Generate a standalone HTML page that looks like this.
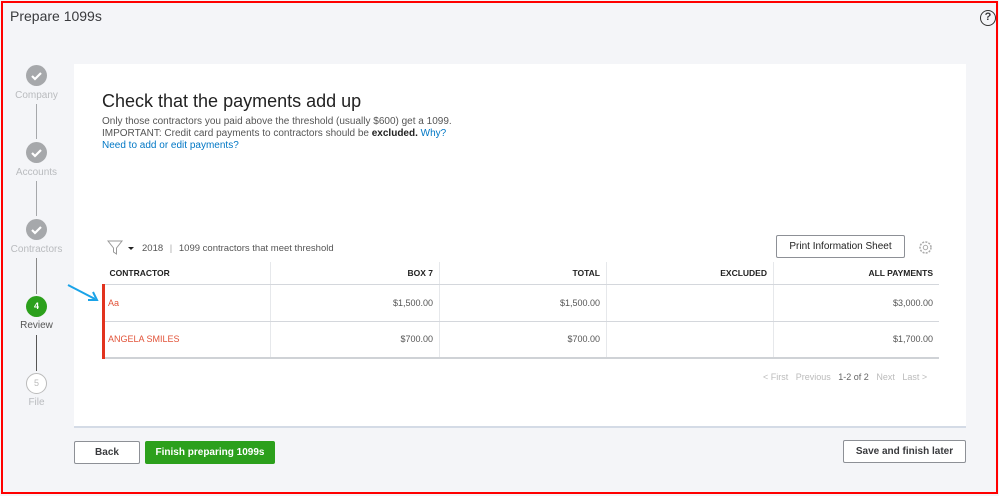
<!DOCTYPE html>
<html><head><style>
*{box-sizing:border-box;margin:0;padding:0}
body{width:999px;height:496px;background:#f4f5f8;font-family:"Liberation Sans",sans-serif;position:relative;overflow:hidden;color:#393a3d}
.frame{position:absolute;left:1px;top:1px;width:997px;height:493px;border:2px solid #f00;z-index:5}
.abs{position:absolute}
.title{left:10px;top:8px;font-size:14px;color:#393a3d}
.help{left:980px;top:10px;width:16px;height:16px;border:1.5px solid #333;border-radius:50%;font-size:11px;text-align:center;line-height:13px;font-weight:bold}
.circ{position:absolute;left:26px;width:21px;height:21px;border-radius:50%;background:#a6a8ab}
.lbl{position:absolute;left:0;width:73px;text-align:center;font-size:10px;color:#b9bbbe}
.vl{position:absolute;left:36px;width:1px;background:#a6a8ab}
.card{left:74px;top:64px;width:892px;height:364px;background:#fff;border-bottom:2px solid #d4dbe6}
h1{position:absolute;left:102px;top:91px;font-size:18px;font-weight:normal;color:#222}
.p{position:absolute;left:102px;font-size:10px;color:#555}
a{color:#0077c5;text-decoration:none}
table{position:absolute;left:102px;top:262px;width:837px;border-collapse:collapse;font-size:9px}
td,th{height:37px;padding:0 6px;border-left:1px solid #e6e8eb;text-align:right;color:#555}
th{height:22px;font-weight:bold;color:#222;font-size:8.5px;border-bottom:1px solid #d4d7dc}
td{border-bottom:1px solid #d4d7dc}
tr.last td{border-bottom:2px solid #cfd2d6}
td:first-child,th:first-child{text-align:left;border-left:none}
td.n{color:#e2543a;border-left:3px solid #e2331e;padding-left:3px}
.btn{position:absolute;height:23px;border:1px solid #8d9096;background:#fff;font-size:10px;font-weight:bold;text-align:center;line-height:21px;color:#393a3d;border-radius:2px}
</style></head><body>
<div class="abs title">Prepare 1099s</div>
<div class="abs help">?</div>

<div class="vl" style="top:104px;height:35px"></div>
<div class="vl" style="top:181px;height:35px"></div>
<div class="vl" style="top:258px;height:36px;background:#888"></div>
<div class="vl" style="top:335px;height:36px;background:#555"></div>
<div class="circ" style="top:65px"><svg width="21" height="21"><path d="M6 11l3 3 6-6" stroke="#fff" stroke-width="2.2" fill="none"/></svg></div>
<div class="lbl" style="top:90px">Company</div>
<div class="circ" style="top:142px"><svg width="21" height="21"><path d="M6 11l3 3 6-6" stroke="#fff" stroke-width="2.2" fill="none"/></svg></div>
<div class="lbl" style="top:167px">Accounts</div>
<div class="circ" style="top:219px"><svg width="21" height="21"><path d="M6 11l3 3 6-6" stroke="#fff" stroke-width="2.2" fill="none"/></svg></div>
<div class="lbl" style="top:244px">Contractors</div>
<div class="circ" style="top:296px;background:#2ca01c;color:#fff;font-size:9px;text-align:center;line-height:21px;font-weight:bold">4</div>
<div class="lbl" style="top:320px;color:#555">Review</div>
<div class="circ" style="top:373px;background:#fff;border:1px solid #bbb;color:#bbb;font-size:9px;text-align:center;line-height:19px">5</div>
<div class="lbl" style="top:397px">File</div>

<div class="abs card"></div>
<svg class="abs" style="left:64px;top:283px" width="38" height="22"><path d="M4 2 L31 16" stroke="#1aa3e8" stroke-width="2"/><path d="M24 17 L33 17 L29 9" stroke="#1aa3e8" stroke-width="2" fill="none"/></svg>
<h1>Check that the payments add up</h1>
<div class="p" style="top:116px">Only those contractors you paid above the threshold (usually $600) get a 1099.</div>
<div class="p" style="top:128px">IMPORTANT: Credit card payments to contractors should be <b style="color:#222">excluded.</b> <a>Why?</a></div>
<div class="p" style="top:140px"><a>Need to add or edit payments?</a></div>

<svg class="abs" style="left:107px;top:240px" width="30" height="16"><path d="M1 1h14l-5.5 7v6l-3-2v-4z" stroke="#999" fill="none"/><path d="M21 7h6l-3 3z" fill="#222"/></svg>
<div class="abs" style="left:142px;top:243px;font-size:9.5px;color:#555">2018 <span style="color:#aaa;margin:0 4px">|</span> 1099 contractors that meet threshold</div>
<div class="btn" style="left:776px;top:235px;width:129px;font-weight:normal;color:#222">Print Information Sheet</div>
<svg class="abs" style="left:918px;top:240px" width="15" height="15"><circle cx="7.5" cy="7.5" r="5.5" stroke="#aaa" stroke-width="1.5" fill="none" stroke-dasharray="2 1.2"/><circle cx="7.5" cy="7.5" r="2.2" stroke="#aaa" fill="none"/></svg>

<table>
<tr><th style="width:167px">CONTRACTOR</th><th style="width:169px">BOX 7</th><th style="width:167px">TOTAL</th><th style="width:167px">EXCLUDED</th><th>ALL PAYMENTS</th></tr>
<tr><td class="n">Aa</td><td>$1,500.00</td><td>$1,500.00</td><td></td><td>$3,000.00</td></tr>
<tr class="last"><td class="n">ANGELA SMILES</td><td>$700.00</td><td>$700.00</td><td></td><td>$1,700.00</td></tr>
</table>
<div class="abs" style="left:763px;top:372px;font-size:9px;color:#bbb">&lt; First &nbsp; Previous &nbsp; <span style="color:#666">1-2 of 2</span> &nbsp; Next &nbsp; Last &gt;</div>

<div class="btn" style="left:74px;top:441px;width:66px">Back</div>
<div class="btn" style="left:145px;top:441px;width:130px;background:#2ca01c;border-color:#2ca01c;color:#fff">Finish preparing 1099s</div>
<div class="btn" style="left:843px;top:440px;width:123px">Save and finish later</div>
<div class="frame"></div>
</body></html>
